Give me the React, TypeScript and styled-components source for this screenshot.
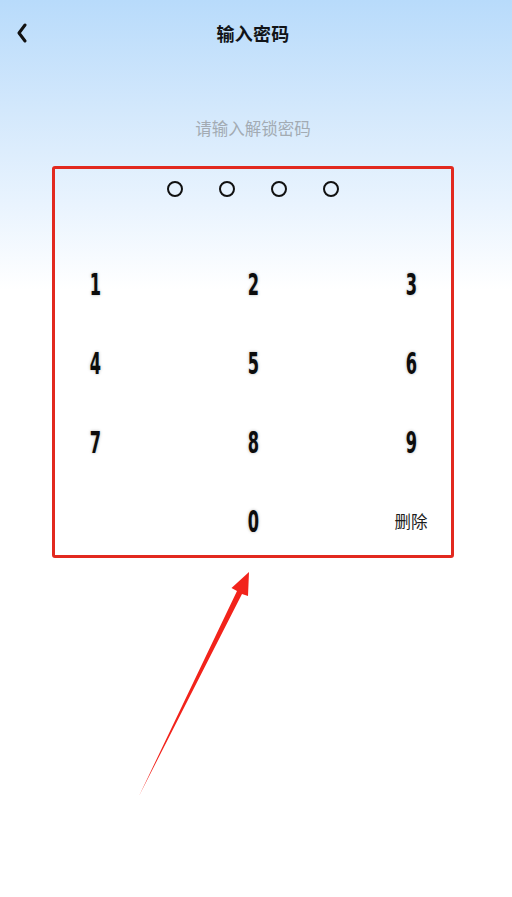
import React from 'react';
import styled, { createGlobalStyle } from 'styled-components';

const GlobalStyle = createGlobalStyle`
  html, body {
    margin: 0;
    padding: 0;
    background: #ffffff;
  }
  * {
    box-sizing: border-box;
  }
`;

const Page = styled.div`
  position: relative;
  width: 100%;
  min-height: 897px;
  padding-right: 6px;
  display: flex;
  flex-direction: column;
  align-items: center;
  background: linear-gradient(180deg, #b8dbfb 0px, #d3e8fc 110px, #e8f3fe 200px, #ffffff 290px);
  font-family: 'Noto Sans CJK SC', 'Noto Sans', sans-serif;
  overflow: hidden;
`;

const Header = styled.div`
  position: relative;
  width: 100%;
  height: 66px;
  display: flex;
  align-items: center;
  justify-content: center;
`;

const BackButton = styled.button`
  position: absolute;
  left: 12px;
  top: 20px;
  width: 20px;
  height: 26px;
  padding: 0;
  border: none;
  background: none;
  display: flex;
  align-items: center;
  justify-content: center;
`;

const Title = styled.h1`
  margin: 0;
  font-size: 18px;
  font-weight: 700;
  color: #111418;
  letter-spacing: 0.3px;
`;

const Hint = styled.div`
  margin-top: 46px;
  height: 32px;
  line-height: 32px;
  font-size: 16.5px;
  color: #a3abb3;
`;

const PadBox = styled.div`
  margin-top: 22px;
  width: 402px;
  height: 392px;
  border: 3px solid #e2291f;
  border-radius: 3px;
  display: flex;
  flex-direction: column;
  align-items: center;
`;

const Dots = styled.div`
  margin-top: 12px;
  display: flex;
  gap: 36px;
`;

const Dot = styled.span<{ $filled?: boolean }>`
  width: 16px;
  height: 16px;
  border: 2px solid #111;
  border-radius: 50%;
  background: ${(p) => (p.$filled ? '#111' : 'transparent')};
`;

const Keys = styled.div`
  margin-top: 55px;
  width: 100%;
  display: grid;
  grid-template-columns: repeat(3, 80px);
  grid-auto-rows: 66px;
  row-gap: 13px;
  justify-content: space-between;
`;

const Key = styled.button`
  border: none;
  background: none;
  padding: 0;
  display: flex;
  align-items: center;
  justify-content: center;
  color: #0c0c0c;
  cursor: pointer;
`;

const Digit = styled.span`
  display: inline-block;
  font-family: 'DejaVu Sans Condensed', 'DejaVu Sans', sans-serif;
  font-weight: 700;
  font-size: 30px;
  line-height: 1;
  transform: scaleX(0.6);
  text-shadow: 0 0 4px rgba(0, 0, 0, 0.3);
`;

const DeleteLabel = styled.span`
  font-family: 'Noto Sans CJK SC', sans-serif;
  font-size: 16.5px;
  color: #1c1c1c;
  margin-top: -2px;
`;

const Arrow = styled.svg`
  position: absolute;
  left: 0;
  top: 0;
  pointer-events: none;
`;

const keys = ['1', '2', '3', '4', '5', '6', '7', '8', '9', '', '0', 'del'];

export default function App() {
  return (
    <>
      <GlobalStyle />
      <Page>
        <Header>
          <BackButton aria-label="返回">
            <svg width="12" height="20" viewBox="0 0 12 20">
              <polyline
                points="9,2 3,10 9,18"
                fill="none"
                stroke="#111"
                strokeWidth="3"
                strokeLinecap="round"
                strokeLinejoin="round"
              />
            </svg>
          </BackButton>
          <Title>输入密码</Title>
        </Header>
        <Hint>请输入解锁密码</Hint>
        <PadBox>
          <Dots>
            <Dot />
            <Dot />
            <Dot />
            <Dot />
          </Dots>
          <Keys>
            {keys.map((k, i) => (
              <Key key={i}>
                {k === 'del' ? <DeleteLabel>删除</DeleteLabel> : k ? <Digit>{k}</Digit> : null}
              </Key>
            ))}
          </Keys>
        </PadBox>
        <Arrow width="512" height="897" viewBox="0 0 512 897">
          <polygon
            points="139,796 237,591 231.5,588 249,572 248,596 242,594"
            fill="#f2231b"
          />
        </Arrow>
      </Page>
    </>
  );
}
